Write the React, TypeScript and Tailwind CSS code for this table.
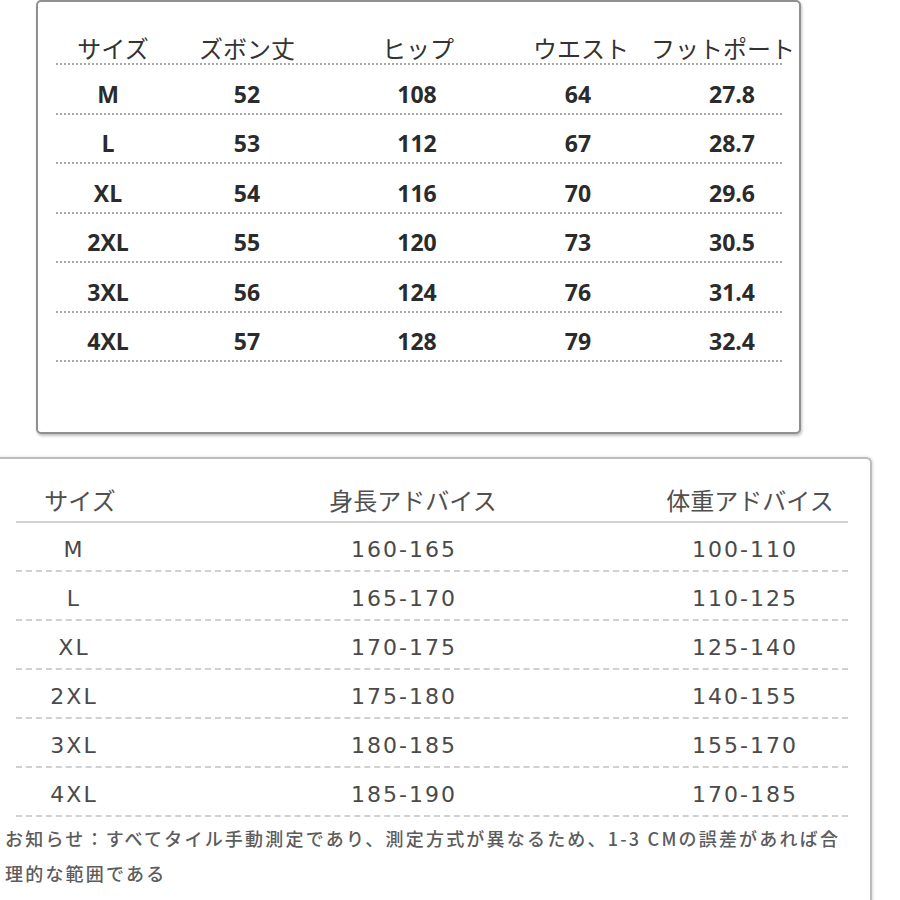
import React from "react";

const topRows = [
  ["M", "52", "108", "64", "27.8"],
  ["L", "53", "112", "67", "28.7"],
  ["XL", "54", "116", "70", "29.6"],
  ["2XL", "55", "120", "73", "30.5"],
  ["3XL", "56", "124", "76", "31.4"],
  ["4XL", "57", "128", "79", "32.4"],
];

const bottomRows = [
  ["M", "160-165", "100-110"],
  ["L", "165-170", "110-125"],
  ["XL", "170-175", "125-140"],
  ["2XL", "175-180", "140-155"],
  ["3XL", "180-185", "155-170"],
  ["4XL", "185-190", "170-185"],
];

function Cell({ children }: { children: React.ReactNode }) {
  return <div className="flex justify-center whitespace-nowrap">{children}</div>;
}

function TopTable() {
  const heads = ["サイズ", "ズボン丈", "ヒップ", "ウエスト", "フットポート"];
  return (
    <div className="ml-[18px] w-[726px]">
      <div className="grid h-[63px] grid-cols-[114px_154px_188px_138px_146px] items-end border-b-2 border-dotted border-[#a8a8a8] pb-[3px] font-['Noto_Sans_CJK_JP',sans-serif] text-[24px] leading-[24px] text-[#333]">
        {heads.map((h) => (
          <Cell key={h}>{h}</Cell>
        ))}
      </div>
      {topRows.map((r) => (
        <div
          key={r[0]}
          className="grid h-[49.5px] grid-cols-[104px_174px_166px_156px_152px] items-center border-b-2 border-dotted border-[#a8a8a8] pt-[11px] font-['Open_Sans',sans-serif] text-[23px] font-bold leading-none text-[#2b2b2b]"
        >
          {r.map((v, i) => (
            <Cell key={i}>{v}</Cell>
          ))}
        </div>
      ))}
    </div>
  );
}

function BottomTable() {
  const heads = ["サイズ", "身長アドバイス", "体重アドバイス"];
  return (
    <div className="ml-[26px] w-[832px]">
      <div className="grid h-[64px] grid-cols-[128px_538px_136px] items-end border-b-2 border-[#d2d2d2] pb-[9px] font-['Noto_Sans_CJK_JP',sans-serif] text-[24px] leading-[24px] text-[#505050]">
        {heads.map((h) => (
          <Cell key={h}>{h}</Cell>
        ))}
      </div>
      {bottomRows.map((r) => (
        <div
          key={r[0]}
          className="grid h-[49px] grid-cols-[116px_544px_138px] items-center border-b-2 border-dashed border-[#d0d0d0] pt-[6px] font-['DejaVu_Sans',sans-serif] text-[22px] leading-none tracking-[2px] text-[#4a4a4a]"
        >
          {r.map((v, i) => (
            <Cell key={i}>{v}</Cell>
          ))}
        </div>
      ))}
    </div>
  );
}

export default function App() {
  return (
    <div className="h-[900px] w-[900px] overflow-hidden bg-white">
      <div className="ml-[36px] h-[434px] w-[765px] rounded-[5px] border-2 border-[#909090] bg-white shadow-[1px_2px_3px_rgba(0,0,0,0.25)]">
        <TopTable />
      </div>
      <div className="-ml-[10px] mt-[23px] h-[470px] w-[882px] rounded-tr-[6px] border-t-2 border-r-2 border-[#bcbcbc] bg-white shadow-[1px_0_3px_rgba(0,0,0,0.15)]">
        <BottomTable />
        <p className="mt-[4px] pl-[15px] font-['Noto_Sans_CJK_JP',sans-serif] text-[18px] font-medium leading-[35px] tracking-[2.2px] text-[#5c5c5c]">
          お知らせ：すべてタイル手動測定であり、測定方式が異なるため、1-3 CMの誤差があれば合
          <br />
          理的な範囲である
        </p>
      </div>
    </div>
  );
}
